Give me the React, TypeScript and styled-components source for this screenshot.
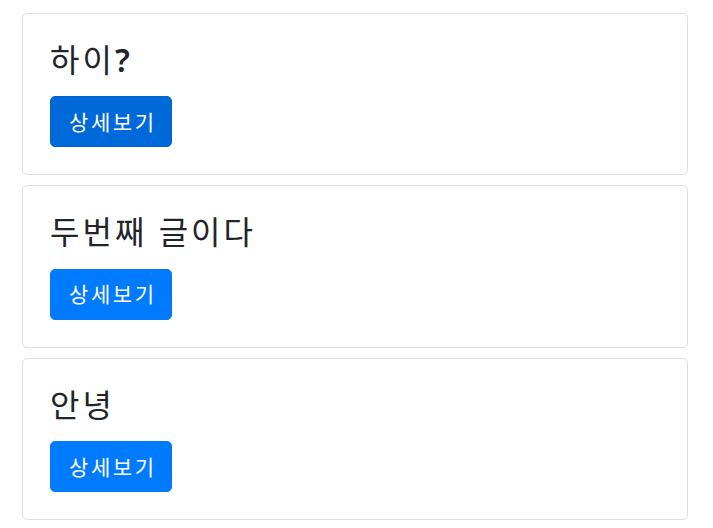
import React from "react";
import styled, { createGlobalStyle } from "styled-components";

const GlobalStyled = createGlobalStyle`
  *, *::after, *::before {
    box-sizing: border-box;
  }

  body {
    margin: 0;
    background-color: #fff;
    font-family: "Noto Sans", "Noto Sans CJK KR", sans-serif;
    color: #212529;
  }
`;

const Wrapper = styled.div`
  padding: 13px 0 0 22px;
`;

const Card = styled.div`
  width: 666px;
  margin-bottom: 10px;
  border: 1px solid #dfdfdf;
  border-radius: 5px;
  background-color: #fff;
`;

const CardBody = styled.div`
  padding: 27px;
`;

const Title = styled.h3`
  margin: 0 0 17px;
  font-size: 32px;
  font-weight: 400;
  line-height: 1.2;
  letter-spacing: 3px;
`;

const Mark = styled.span`
  font-weight: 600;
  letter-spacing: 0;
`;

const DetailButton = styled.button<{ $active?: boolean }>`
  display: inline-block;
  padding: 8.5px 14px 8.5px 18px;
  border: 1px solid ${(p) => (p.$active ? "#0062cc" : "#007bff")};
  border-radius: 5px;
  background-color: ${(p) => (p.$active ? "#0069d9" : "#007bff")};
  color: #fff;
  font-family: "Noto Sans", "Noto Sans CJK KR", sans-serif;
  font-size: 21px;
  line-height: 32px;
  letter-spacing: 2.6px;
  cursor: pointer;
`;

const posts = [
  { id: 1, title: "하이", mark: "?" },
  { id: 2, title: "두번째 글이다", mark: "" },
  { id: 3, title: "안녕", mark: "" },
];

const App: React.FC = () => {
  return (
    <>
      <GlobalStyled />
      <Wrapper>
        {posts.map((post, i) => (
          <Card key={post.id}>
            <CardBody>
              <Title>
                {post.title}
                {post.mark && <Mark>{post.mark}</Mark>}
              </Title>
              <DetailButton $active={i === 0}>상세보기</DetailButton>
            </CardBody>
          </Card>
        ))}
      </Wrapper>
    </>
  );
};

export default App;
